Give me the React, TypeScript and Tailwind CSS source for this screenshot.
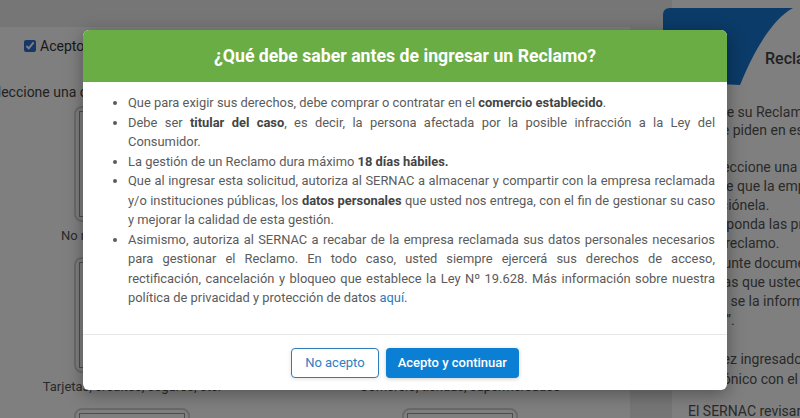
import React from "react";

const font = "font-['Roboto','Liberation_Sans',sans-serif]";

function OptionCard({ label }: { label: string }) {
  return (
    <div className="flex flex-col items-center">
      <div className="h-[116px] w-[116px] rounded-lg border-2 border-[#d4d4d4] p-[3px]">
        <div className="h-full w-full border border-[#9a9a9a] bg-white" />
      </div>
      <div className="mt-[5px] whitespace-nowrap text-[13px] leading-[17px] text-[#555]">
        {label}
      </div>
    </div>
  );
}

function Backdrop() {
  const firstLines = ["Ingrese su Reclamo y complete", "que se piden en este formulario"];
  const steps = [
    "1. Seleccione una opción",
    "indique que la empresa",
    "selecciónela.",
    "2. Responda las preguntas",
    "de su reclamo.",
    "3. Adjunte documentos",
    "pruebas que usted disponga",
    "donde se la información",
    "“Envío”.",
  ];

  return (
    <div className="flex h-full">
      {/* left form card */}
      <div className="mt-[27px] w-[630px] shrink-0 bg-white">
        <label className="flex h-[20px] items-center gap-[4px] pl-[24px] mt-[9px] text-[14px] text-[#333]">
          <input type="checkbox" defaultChecked className="h-[12px] w-[12px] accent-[#2f6fd0]" />
          Acepto condiciones y términos de uso
        </label>
        <div className="ml-[-18px] mt-[26px] whitespace-nowrap text-[14px] leading-[20px] text-[#444]">
          Seleccione una opción según el tipo de reclamo:
        </div>
        <div className="ml-[-32px] mt-[4px] grid w-[656px] grid-cols-2 gap-y-[13px]">
          <OptionCard label="No me corresponde aquí" />
          <OptionCard label="Servicios básicos, luz, agua" />
          <OptionCard label="Tarjetas, créditos, seguros, etc." />
          <OptionCard label="Comercio, tiendas, supermercados" />
          <OptionCard label="Transporte" />
          <OptionCard label="Otros" />
        </div>
      </div>

      {/* right info column */}
      <div className="ml-[42px] flex-1 bg-white">
        <div className="relative h-[103px]">
          <svg
            className="absolute left-[-9px] top-[8px]"
            width="132"
            height="80"
            viewBox="0 0 132 80"
          >
            <path
              d="M0 7 Q0 0 7 0 L130 0 C108 12 90 45 77 77 C50 76 22 74 0 60 Z"
              fill="#1676d0"
            />
          </svg>
          <div className="absolute left-[93px] top-[47px] whitespace-nowrap text-[16px] font-medium text-[#444]">
            Reclamo
          </div>
        </div>
        <div className="pl-[16px] text-[14px] text-[#555]">
          <div className="leading-[18px]">
            {firstLines.map((t) => (
              <div key={t} className="whitespace-nowrap">
                {t}
              </div>
            ))}
          </div>
          <div className="mt-[18.5px] leading-[19.2px]">
            {steps.map((t) => (
              <div key={t} className="whitespace-nowrap">
                {t}
              </div>
            ))}
          </div>
          <div className="mt-[20px] leading-[19.2px]">
            <div className="whitespace-nowrap">Una vez ingresado, la</div>
            <div className="whitespace-nowrap">electrónico con el número</div>
          </div>
          <div className="mt-[13px] whitespace-nowrap leading-[19.2px]">El SERNAC revisará</div>
        </div>
      </div>
    </div>
  );
}

export default function App() {
  return (
    <div className={`relative h-[418px] w-[800px] overflow-hidden bg-[#ececec] ${font}`}>
      <Backdrop />

      <div className="absolute inset-0 bg-black/50" />

      <div className="absolute left-[83px] top-[30px] w-[644px] overflow-hidden rounded-[6px] bg-white shadow-[0_4px_18px_rgba(0,0,0,0.35)]">
        <div className="flex h-[52px] items-center justify-center bg-[#6aad45]">
          <h2 className="text-[17.7px] font-bold text-white">
            ¿Qué debe saber antes de ingresar un Reclamo?
          </h2>
        </div>

        <div className="pb-[26px] pl-[45px] pr-[12px] pt-[11px]">
          <ul className="list-disc text-justify text-[12.9px] leading-[19.5px] text-[#5b5b5b]">
            <li>
              Que para exigir sus derechos, debe comprar o contratar en el{" "}
              <b className="text-[#444]">comercio establecido</b>.
            </li>
            <li>
              Debe ser <b className="text-[#444]">titular del caso</b>, es decir, la persona
              afectada por la posible infracción a la Ley del Consumidor.
            </li>
            <li>
              La gestión de un Reclamo dura máximo{" "}
              <b className="text-[#444]">18 días hábiles.</b>
            </li>
            <li>
              Que al ingresar esta solicitud, autoriza al SERNAC a almacenar y compartir con la
              empresa reclamada y/o instituciones públicas, los{" "}
              <b className="text-[#444]">datos personales</b> que usted nos entrega, con el fin de
              gestionar su caso y mejorar la calidad de esta gestión.
            </li>
            <li>
              Asimismo, autoriza al SERNAC a recabar de la empresa reclamada sus datos personales
              necesarios para gestionar el Reclamo. En todo caso, usted siempre ejercerá sus
              derechos de acceso, rectificación, cancelación y bloqueo que establece la Ley Nº
              19.628. Más información sobre nuestra política de privacidad y protección de datos{" "}
              <a className="text-[#2a7bbd]">aquí</a>.
            </li>
          </ul>
        </div>

        <div className="flex justify-center gap-[7px] border-t border-[#e6e6e6] pb-[12px] pt-[13px]">
          <button className="h-[30px] rounded-[4px] border border-[#2f7cb8] bg-white px-[13px] text-[13px] text-[#2f80c2] shadow-[0_1px_4px_rgba(0,0,0,0.12)]">
            No acepto
          </button>
          <button className="h-[30px] rounded-[4px] bg-[#0b7fd3] px-[12px] text-[13px] font-medium text-white shadow-[0_1px_4px_rgba(0,0,0,0.2)]">
            Acepto y continuar
          </button>
        </div>
      </div>
    </div>
  );
}
